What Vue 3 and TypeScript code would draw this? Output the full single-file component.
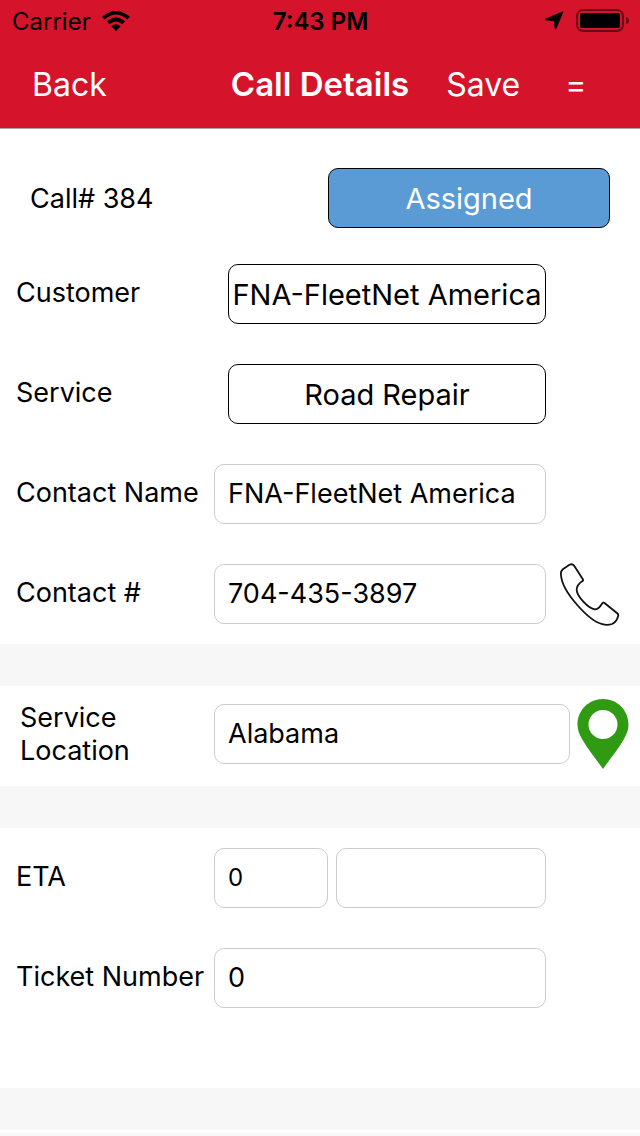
<script setup lang="ts">
import { ref } from 'vue'

const contactName = ref('FNA-FleetNet America')
const contactNumber = ref('704-435-3897')
const location = ref('Alabama')
const eta = ref('0')
const etaUnit = ref('')
const ticket = ref('0')
</script>

<template>
  <div class="page">
    <header class="top">
      <div class="status">
        <div class="carrier">
          <span>Carrier</span>
          <svg class="wifi" width="28" height="20" viewBox="0 0 28 20" aria-hidden="true">
            <path d="M0 5.800Q14-5.800 28 5.800L25.200 8.600Q14-1.400 2.800 8.600Z" />
            <path d="M4.800 10.500Q14 2.400 23.200 10.500L20.400 13.300Q14 7.500 7.600 13.300Z" />
            <path d="M9.400 15.200Q14 11.200 18.600 15.200L14 20Z" />
          </svg>
        </div>
        <span class="clock">7:43 PM</span>
        <div class="indicators">
          <svg width="20" height="20" viewBox="0 0 20 20" aria-hidden="true">
            <path d="M18.300 0.500Q19.600 0.200 19.200 1.500L12.300 17.700Q11.300 19.300 10.700 17.500L9.900 10.300L2.200 9.300Q0.200 8.800 1.800 7.600Z" />
          </svg>
          <svg width="53" height="24" viewBox="0 0 53 24" aria-hidden="true">
            <rect x="1" y="1" width="46" height="21" rx="6" fill="none" stroke="#000" stroke-opacity=".5" stroke-width="2" />
            <rect x="4" y="4" width="40" height="15" rx="2" />
            <path d="M50 8Q53 9 53 11.500Q53 14 50 15Z" fill-opacity=".5" />
          </svg>
        </div>
      </div>
      <nav class="bar">
        <div class="side"><button type="button" class="nav-btn">Back</button></div>
        <h1>Call Details</h1>
        <div class="side actions">
          <button type="button" class="nav-btn">Save</button>
          <button type="button" class="nav-btn" aria-label="Menu">=</button>
        </div>
      </nav>
    </header>

    <main>
      <section class="card details">
        <div class="call">
          <span>Call# 384</span>
          <button type="button" class="choice assigned">Assigned</button>
        </div>
        <div class="row inset">
          <span id="customer-label" class="label">Customer</span>
          <button type="button" class="choice" aria-describedby="customer-label">FNA-FleetNet America</button>
        </div>
        <div class="row inset">
          <span id="service-label" class="label">Service</span>
          <button type="button" class="choice" aria-describedby="service-label">Road Repair</button>
        </div>
        <div class="row">
          <label class="label" for="contact-name">Contact Name</label>
          <input id="contact-name" v-model="contactName" type="text" />
        </div>
        <div class="row">
          <label class="label" for="contact-number">Contact #</label>
          <input id="contact-number" v-model="contactNumber" type="tel" />
          <button type="button" class="icon-btn" aria-label="Call contact">
            <svg width="60" height="64" viewBox="0 0 60 64" fill="none" stroke="#111" stroke-width="1.800" stroke-linejoin="round">
              <path d="M2.800 7.300L9.500 2.800Q12.300 1.300 14 3.600L23 17.500Q23.400 18.500 22.500 19Q16.500 23 16.700 28C17 34 28 46.500 35 47.300Q38.500 47.600 42.300 41.300Q43.300 40 44.500 41L57.500 51.500Q58.600 52.600 58 54.500Q56.500 60 52 62Q47.500 63.500 42.300 62.200C29 59 2 30 1 13Q.6 9 2.800 7.300Z" />
            </svg>
          </button>
        </div>
      </section>

      <section class="card place">
        <label class="label" for="location">Service Location</label>
        <input id="location" v-model="location" type="text" />
        <button type="button" class="icon-btn" aria-label="Show on map">
          <svg width="52" height="70" viewBox="0 0 52 70">
            <path fill="#2f9a12" fill-rule="evenodd" d="M26 0C11.500 0 .5 11.500 .5 25.500C.5 31 2.500 35.500 5 40C11 50.500 19 60 26 70C33 60 41 50.500 47 40C49.500 35.500 51.500 31 51.500 25.500C51.500 11.500 40.500 0 26 0ZM26 11A14.500 14.500 0 1 1 26 40A14.500 14.500 0 1 1 26 11Z" />
          </svg>
        </button>
      </section>

      <section class="card arrival">
        <div class="row">
          <label class="label" for="eta">ETA</label>
          <div class="pair">
            <input id="eta" v-model="eta" class="small" type="text" />
            <input v-model="etaUnit" type="text" aria-label="ETA time" />
          </div>
        </div>
        <div class="row">
          <label class="label" for="ticket">Ticket Number</label>
          <input id="ticket" v-model="ticket" type="text" />
        </div>
      </section>
      <section class="card next"></section>
    </main>
  </div>
</template>

<style>
body {
  margin: 0;
  background: #f7f7f7;
}
</style>

<style scoped>
.page {
  font-family: Inter, "Liberation Sans", sans-serif;
  font-size: 27px;
  line-height: 33px;
  color: #000;
}
.page * {
  box-sizing: border-box;
}
button,
input {
  font: inherit;
  color: inherit;
  margin: 0;
}
button {
  cursor: pointer;
}
.top {
  background: #d5132a;
  border-bottom: 1px solid #a5a5a5;
}
.status {
  display: grid;
  grid-template-columns: 1fr auto 1fr;
  align-items: center;
  height: 40px;
  padding: 2px 11px 0 12px;
  font-size: 24px;
}
.carrier,
.indicators {
  display: flex;
  align-items: center;
}
.carrier {
  gap: 11px;
}
.indicators {
  justify-content: flex-end;
  gap: 12px;
}
.clock {
  font-weight: 600;
}
.bar {
  display: grid;
  grid-template-columns: 1fr auto 1fr;
  align-items: center;
  height: 88px;
  color: #fff;
  font-size: 32px;
}
.side {
  padding-left: 32px;
}
.actions {
  display: flex;
  gap: 45px;
  padding-left: 37px;
}
.nav-btn {
  padding: 0;
  border: 0;
  background: none;
}
h1 {
  margin: 0;
  font-size: 33px;
  font-weight: 600;
}
.card {
  display: flex;
  background: #fff;
  margin-bottom: 42px;
}
.details {
  flex-direction: column;
  gap: 40px;
  padding: 39px 0 20px;
}
.call {
  display: grid;
  grid-template-columns: 298px 1fr;
  align-items: center;
  padding: 0 30px;
  margin-bottom: -4px;
}
.row {
  display: grid;
  grid-template-columns: 198px 1fr 62px;
  align-items: center;
  height: 60px;
  padding: 0 18px 0 16px;
}
.row > input,
.row > .choice,
.pair {
  margin-right: 14px;
}
.inset > .choice {
  margin-left: 14px;
}
.label {
  white-space: nowrap;
}
.row > .label {
  padding-bottom: 3px;
}
.choice {
  height: 60px;
  padding: 0;
  border: 1px solid #000;
  border-radius: 10px;
  background: #fff;
  font-size: 29px;
  white-space: nowrap;
}
.assigned {
  background: #5b9bd5;
  color: #fff;
}
input {
  width: 100%;
  min-width: 0;
  height: 60px;
  padding: 0 13px 2px;
  border: 1px solid #ccc;
  border-radius: 10px;
  background: #fff;
  outline: none;
}
.row > input {
  width: auto;
}
.icon-btn {
  display: flex;
  padding: 0;
  border: 0;
  background: none;
}
.row > .icon-btn {
  margin: -2px 0;
}
.place {
  align-items: center;
  padding: 13px 11px 17px 20px;
}
.place .label {
  flex: 0 0 194px;
  padding-right: 60px;
  white-space: normal;
}
.place .icon-btn {
  margin-left: 7px;
}
.arrival {
  flex-direction: column;
  gap: 40px;
  padding: 20px 0 80px;
}
.pair {
  display: grid;
  grid-template-columns: 114px 1fr;
  gap: 8px;
}
.small {
  font-size: 24px;
}
.next {
  height: 3px;
  margin: 0;
}
</style>
